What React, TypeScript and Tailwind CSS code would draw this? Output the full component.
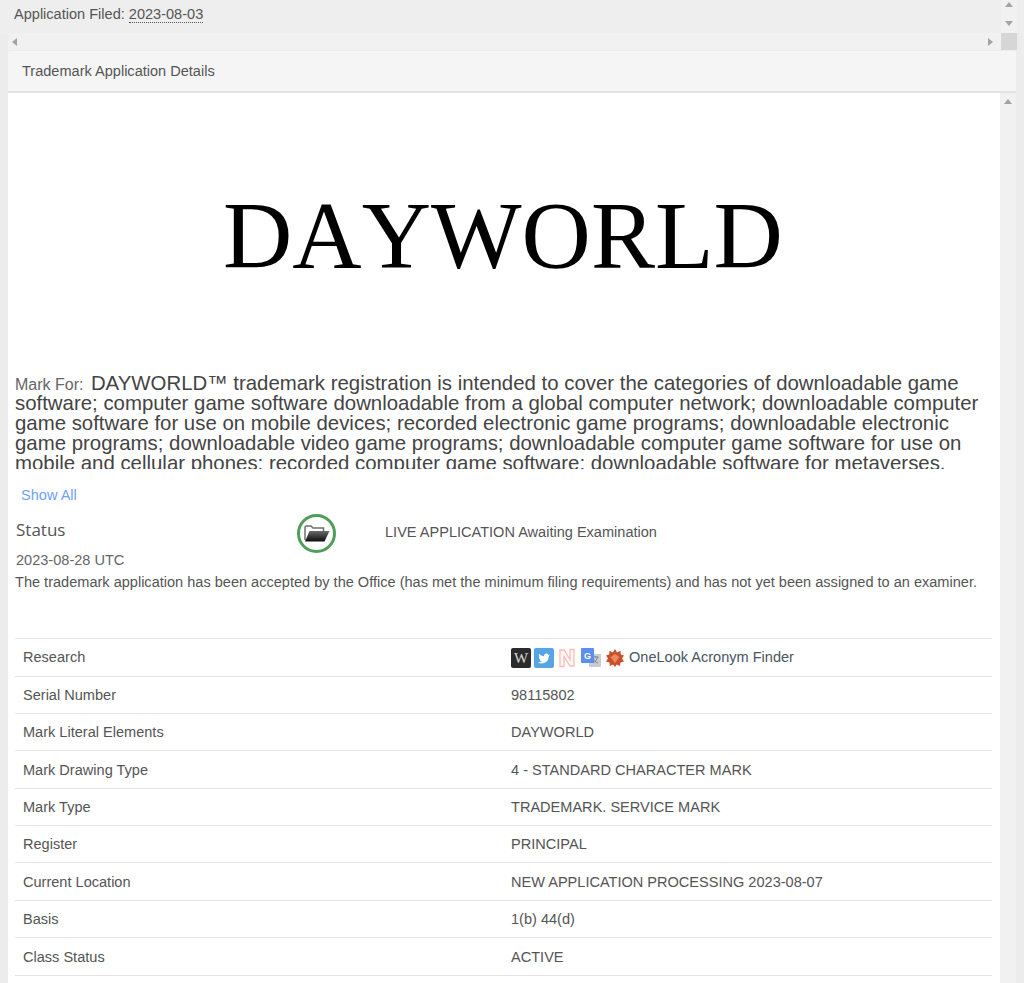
import { ReactNode } from "react";

const rows: { label: string; value: ReactNode }[] = [
  { label: "Serial Number", value: "98115802" },
  { label: "Mark Literal Elements", value: "DAYWORLD" },
  { label: "Mark Drawing Type", value: "4 - STANDARD CHARACTER MARK" },
  { label: "Mark Type", value: "TRADEMARK. SERVICE MARK" },
  { label: "Register", value: "PRINCIPAL" },
  { label: "Current Location", value: "NEW APPLICATION PROCESSING 2023-08-07" },
  { label: "Basis", value: "1(b) 44(d)" },
  { label: "Class Status", value: "ACTIVE" },
];

function Arrow({ dir }: { dir: "up" | "down" | "left" | "right" }) {
  const points = {
    up: "4,1 8,6 0,6",
    down: "0,1 8,1 4,6",
    left: "6,0 6,8 1,4",
    right: "1,0 6,4 1,8",
  }[dir];
  return (
    <svg width="8" height="8" viewBox="0 0 8 8" className="shrink-0">
      <polygon points={points} fill="#a3a3a3" />
    </svg>
  );
}

function FolderIcon() {
  return (
    <svg width="26" height="17" viewBox="0 0 26 17">
      <defs>
        <linearGradient id="folderFill" x1="0" y1="0" x2="0" y2="1">
          <stop offset="0" stopColor="#6a6a6a" />
          <stop offset="1" stopColor="#0c0c0c" />
        </linearGradient>
      </defs>
      <path d="M1 15V2.500Q1 1 2.500 1H7l2 2h10.500V6" fill="none" stroke="#6f6f6f" strokeWidth="1.500" />
      <path d="M5.500 6H25.500L20.500 16.500H1Z" fill="url(#folderFill)" />
    </svg>
  );
}

function ResearchIcons() {
  return (
    <div className="flex items-center">
      <svg width="20" height="20" viewBox="0 0 20 20" className="mr-[3px]">
        <rect width="20" height="20" rx="2" fill="#2b2b2b" />
        <text x="10" y="15" textAnchor="middle" fontSize="15" fill="#d9d9d9" fontFamily="'Liberation Serif', serif">W</text>
      </svg>
      <svg width="20" height="20" viewBox="0 0 20 20" className="mr-[4px]">
        <rect width="20" height="20" rx="2" fill="#55a4e3" />
        <path d="M4 14.500c5 2.500 11-.5 10.800-6.500l1.200-1.500-1.600.4c-1-2.400-4.800-1.600-4.300 1.300-2 0-3.700-1-5-2.500-.7 1.400-.2 2.800.8 3.500l-1.100-.2c0 1.300.8 2.200 2 2.600l-1 .1c.4 1 1.200 1.500 2.200 1.600-1.100.8-2.500 1.100-4 .7z" fill="#ffffff" />
      </svg>
      <svg width="18" height="20" viewBox="0 0 18 20" className="mr-[5px]">
        <path d="M2 18.500V2h4l6 9.500V1.500h4V18h-4L6 8.500v10z" fill="#fff7f6" stroke="#f6bdb8" strokeWidth="1.300" />
      </svg>
      <svg width="21" height="20" viewBox="0 0 21 20" className="mr-[3px]">
        <rect x="8" y="6" width="12" height="13" rx="1" fill="#c9cdd1" />
        <path d="M11.500 9h6M14.500 8v1M16.500 9c-.5 3-2.500 5-4.500 6M12.500 11c.8 2 2.500 3.500 4.500 4" fill="none" stroke="#7c8288" strokeWidth="1" />
        <rect x="0" y="0" width="13" height="15" rx="1" fill="#5a8ef0" />
        <text x="6.500" y="11" textAnchor="middle" fontSize="9" fontWeight="700" fill="#ffffff" fontFamily="'Liberation Sans', sans-serif">G</text>
      </svg>
      <svg width="20" height="20" viewBox="0 0 20 20" className="mr-[4px]">
        <polygon
          points="10,1 12,4.500 15.500,2.800 15.800,6.500 19,7.500 17,10.500 19,13.500 15.500,14.500 15,18 11.800,16.500 10,19 8,16.500 4.800,18 4.500,14.500 1,13.500 3,10.500 1,7.500 4.200,6.500 4.500,2.800 8,4.500"
          fill="#c8502a"
        />
        <path d="M5.500 9l4.500-3 4.500 3-4.500 6z" fill="#e98a5e" />
      </svg>
      <span className="text-[#4a5560]">OneLook Acronym Finder</span>
    </div>
  );
}

export default function App() {
  return (
    <div className="h-[983px] w-[1024px] overflow-hidden bg-[#ececec] font-['Liberation_Sans',Arial,sans-serif] text-[14.55px] text-[#555]">
      {/* outer list, cut off by its own scrollbars */}
      <div className="flex h-[33px] bg-[#eeeeee]">
        <div className="flex-1 pl-[14px] pt-[7px] leading-[15px] text-[#555]">
          Application Filed:{" "}
          <span className="border-b border-dotted border-[#555]">2023-08-03</span>
        </div>
        <div className="mr-[7px] flex w-[16px] flex-col items-center gap-[11px] bg-[#f1f1f1] pt-[1px]">
          <Arrow dir="up" />
          <Arrow dir="down" />
        </div>
      </div>
      <div className="mr-[7px] flex h-[17px]">
        <div className="ml-[8px] flex flex-1 items-center justify-between bg-[#f1f1f1] pr-[6px] pl-[3px]">
          <Arrow dir="left" />
          <Arrow dir="right" />
        </div>
        <div className="w-[16px] bg-[#d6d6d6]" />
      </div>

      {/* panel */}
      <div className="ml-[8px] mr-[8px] mt-px">
        <div className="flex h-[42px] items-center rounded-t-[2px] border-b-2 border-[#e3e3e3] bg-[#f5f5f5] pl-[14px] pt-[2px] text-[#555]">
          Trademark Application Details
        </div>
        <div className="flex">
          <div className="min-w-0 flex-1 bg-white pl-[7px] pr-[8px]">
            <div className="flex h-[280px] items-center pt-[5px] pl-[208px] font-['Liberation_Serif','Times_New_Roman',serif] text-[96px] leading-none text-black [font-kerning:none]">
              DAYWORLD
            </div>
            <div className="h-[96px] overflow-hidden pr-[4px] text-[20.4px] leading-[20px] text-[#444]">
              <span className="mr-[3px] text-base leading-none text-[#666]">Mark For: </span>
              DAYWORLD™ trademark registration is intended to cover the categories of downloadable game software; computer game software downloadable from a global computer network; downloadable computer game software for use on mobile devices; recorded electronic game programs; downloadable electronic game programs; downloadable video game programs; downloadable computer game software for use on mobile and cellular phones; recorded computer game software; downloadable software for metaverses,
            </div>
            <div className="mt-[16px] pl-[6px] leading-[20px] text-[#6ea1f7]">Show All</div>
            <div className="mt-[8px] flex h-[40px] items-center">
              <div className="mb-[6px] w-[282px] pl-px font-['Open_Sans',sans-serif] text-[17px] text-[#555]">Status</div>
              <div className="flex h-[39px] w-[39px] items-center justify-center rounded-full border-[3px] border-[#4f9e58]">
                <FolderIcon />
              </div>
              <div className="ml-[49px] text-[#555]">LIVE APPLICATION Awaiting Examination</div>
            </div>
            <div className="mt-[-3px] pl-px leading-[20px] text-[#666]">2023-08-28 UTC</div>
            <div className="mt-[2px] h-[66px] leading-[20px] text-[#555]">
              The trademark application has been accepted by the Office (has met the minimum filing requirements) and has not yet been assigned to an examiner.
            </div>
            <div className="flex h-[38.5px] items-center border-y border-[#e3e3e3] pl-[8px] pt-[2px]">
              <div className="w-[488px]">Research</div>
              <ResearchIcons />
            </div>
            {rows.map((row) => (
              <div key={row.label} className="flex h-[37.4px] items-center border-b border-[#e3e3e3] pl-[8px] pt-[2px]">
                <div className="w-[488px]">{row.label}</div>
                <div>{row.value}</div>
              </div>
            ))}
            <div className="h-[20px]" />
          </div>
          <div className="flex w-[16px] justify-center bg-[#f1f1f1] pt-[5px]">
            <Arrow dir="up" />
          </div>
        </div>
      </div>
    </div>
  );
}
